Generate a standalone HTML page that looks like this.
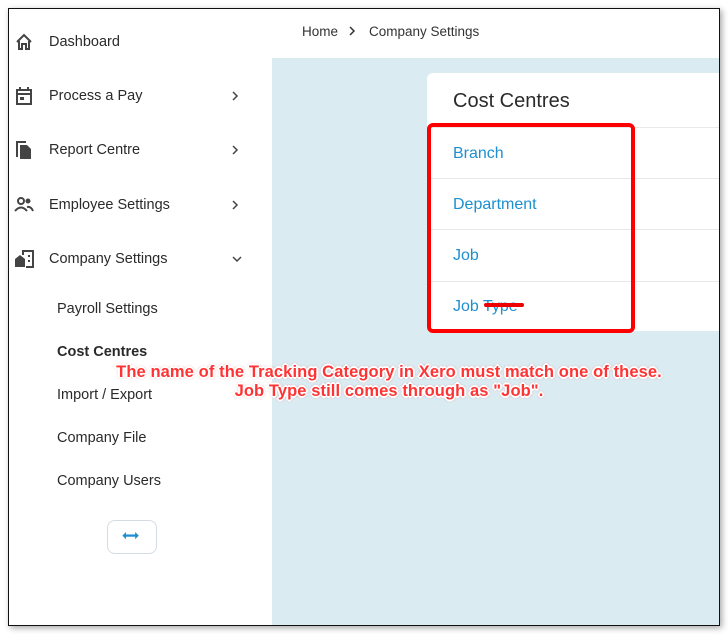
<!DOCTYPE html>
<html><head><style>
*{margin:0;padding:0;box-sizing:border-box}
body{width:728px;height:634px;background:#fff;font-family:"Liberation Sans",sans-serif;position:relative;overflow:hidden}
.frame{position:absolute;left:8px;top:8px;width:712px;height:618px;border:1.5px solid #111;box-shadow:2px 2px 6px rgba(0,0,0,.35);overflow:hidden;background:#dbebf2}
.side{position:absolute;left:0;top:0;width:263px;height:100%;background:#fff}
.hdr{position:absolute;left:263px;top:0;right:0;height:49px;background:#fff;font-size:13.5px;color:#333}
.item{position:absolute;left:0;width:263px;font-size:14.5px;color:#2a2a2a}
.item .ic{position:absolute;left:5px;top:-2px;width:20px;height:20px}
.item .t{position:absolute;left:40px;top:0}
.item .ch{position:absolute;left:221px;top:2px;width:10px;height:12px}
.sub{position:absolute;left:48px;font-size:14.5px;color:#2a2a2a}
.card{position:absolute;left:418px;top:64px;width:300px;height:258px;background:#fff;border-radius:6px 0 0 6px}
.card .h{position:absolute;left:26px;top:17px;font-size:20px;color:#2a2a2a}
.row{position:absolute;left:0;right:0;border-top:1.5px solid #e8e8e8}
.row span{position:absolute;left:26px;font-size:16px;color:#1e8fd0}
.red{position:absolute;left:418px;top:114px;width:208px;height:210px;border:4px solid #f00;border-radius:6px}
.note{position:absolute;left:0;width:760px;text-align:center;font-weight:bold;font-size:16.5px;color:#f33;letter-spacing:0.1px;text-shadow:-1px -1px 0 #fff,1px -1px 0 #fff,-1px 1px 0 #fff,1px 1px 0 #fff,0 2px 0 #fff,2px 0 0 #fff,-2px 0 0 #fff,0 -2px 0 #fff,0 0 3px #c00;}
.btn{position:absolute;left:98px;top:511px;width:50px;height:34px;border:1.5px solid #d5dbe2;border-radius:8px;background:#fff}
</style></head><body>
<div class="frame">
<div class="side">
 <div class="item" style="top:25px"><svg class="ic" viewBox="0 0 20 20"><path d="M3 10 L10 3 L17 10 M5 9 V17 H8 V12 H12 V17 H15 V9" fill="none" stroke="#444" stroke-width="2"/></svg><span class="t">Dashboard</span></div>
 <div class="item" style="top:79px"><svg class="ic" viewBox="0 0 20 20"><rect x="3" y="4" width="14" height="14" fill="none" stroke="#444" stroke-width="2"/><path d="M3 8 H17 M6 1 V5 M14 1 V5" stroke="#444" stroke-width="2"/><rect x="6" y="11" width="4" height="3" fill="#444"/></svg><span class="t">Process a Pay</span><svg class="ch" viewBox="0 0 10 12"><path d="M3 2 L7 6 L3 10" fill="none" stroke="#444" stroke-width="1.5"/></svg></div>
 <div class="item" style="top:133px"><svg class="ic" viewBox="0 0 20 20"><path d="M3 17 V2 H12" fill="none" stroke="#444" stroke-width="2"/><path d="M6 5 H13 L17 9 V19 H6 Z" fill="#444"/></svg><span class="t">Report Centre</span><svg class="ch" viewBox="0 0 10 12"><path d="M3 2 L7 6 L3 10" fill="none" stroke="#444" stroke-width="1.5"/></svg></div>
 <div class="item" style="top:188px"><svg class="ic" viewBox="0 0 20 20"><circle cx="7" cy="6" r="3" fill="none" stroke="#444" stroke-width="2"/><circle cx="14" cy="6" r="2.5" fill="#444"/><path d="M1 16 Q7 9 13 16 M13 12 Q17 11 19 16" fill="none" stroke="#444" stroke-width="2"/></svg><span class="t">Employee Settings</span><svg class="ch" viewBox="0 0 10 12"><path d="M3 2 L7 6 L3 10" fill="none" stroke="#444" stroke-width="1.5"/></svg></div>
 <div class="item" style="top:242px"><svg class="ic" viewBox="0 0 20 20"><path d="M1 18 V10 L6 6 L11 10 V18 Z" fill="#444"/><path d="M9 6 V2 H19 V18 H12" fill="none" stroke="#444" stroke-width="2"/><rect x="14" y="6" width="2" height="2" fill="#444"/><rect x="14" y="11" width="2" height="2" fill="#444"/></svg><span class="t">Company Settings</span><svg class="ch" viewBox="0 0 10 12" style="left:222px;width:12px"><path d="M1 4 L5 8 L9 4" fill="none" stroke="#444" stroke-width="1.5"/></svg></div>
 <div class="sub" style="top:292px">Payroll Settings</div>
 <div class="sub" style="top:335px;font-weight:bold">Cost Centres</div>
 <div class="sub" style="top:378px">Import / Export</div>
 <div class="sub" style="top:421px">Company File</div>
 <div class="sub" style="top:464px">Company Users</div>
 <div class="btn"><svg viewBox="0 0 50 34" width="47" height="31"><path d="M17 16 H31" stroke="#1e8fd0" stroke-width="2.5"/><path d="M15 16 L19 12 V20 Z M33 16 L29 12 V20 Z" fill="#1e8fd0"/></svg></div>
</div>
<div class="hdr"><span style="position:absolute;left:30px;top:15px">Home</span><svg style="position:absolute;left:76px;top:17px" width="8" height="10" viewBox="0 0 8 10"><path d="M2 1 L6 5 L2 9" fill="none" stroke="#333" stroke-width="1.5"/></svg><span style="position:absolute;left:97px;top:15px">Company Settings</span></div>
<div class="card">
 <div class="h">Cost Centres</div>
 <div class="row" style="top:54px"><span style="top:17px">Branch</span></div>
 <div class="row" style="top:105px"><span style="top:17px">Department</span></div>
 <div class="row" style="top:156px"><span style="top:17px">Job</span></div>
 <div class="row" style="top:208px"><span style="top:16px">Job Type</span></div>
 <div style="position:absolute;left:57px;top:230px;width:40px;height:4px;background:#e00;border-radius:2px"></div>
</div>
<div class="red"></div>
<div class="note" style="top:354px">The name of the Tracking Category in Xero must match one of these.</div>
<div class="note" style="top:373px">Job Type still comes through as "Job".</div>
</div>
</body></html>
